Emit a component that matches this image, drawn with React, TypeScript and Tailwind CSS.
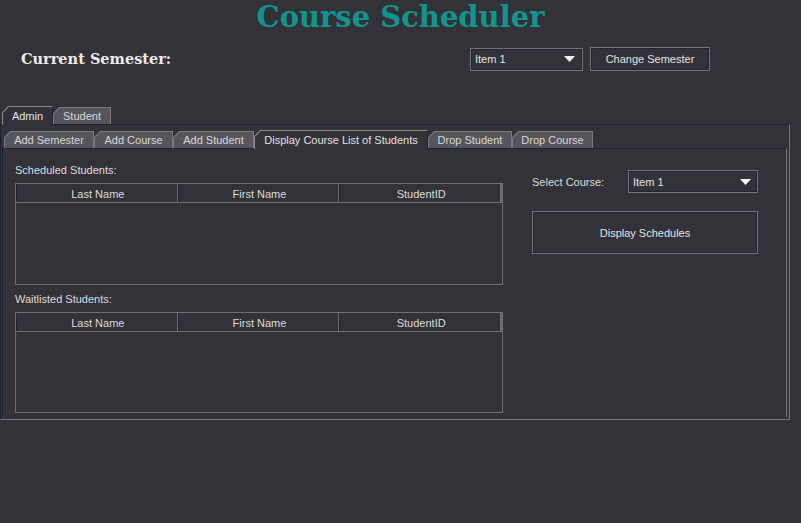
import React from "react";

const BG = "bg-[#333238]";

function Corner({ selected }: { selected: boolean }) {
  return (
    <svg
      width="7"
      height="7"
      viewBox="0 0 7 7"
      className="absolute -top-px -left-px"
    >
      <polygon points="0,0 7,0 0,7" fill="#333238" />
      <line x1="0" y1="7" x2="7" y2="0" stroke={selected ? "#8a898f" : "#7a797f"} strokeWidth="1.2" />
    </svg>
  );
}

function Tab({ label, selected, width }: { label: string; selected?: boolean; width: string }) {
  if (selected) {
    return (
      <div
        className={`relative z-10 -mb-px h-[19px] ${width} ${BG} border-t border-l border-t-[#8a898f] border-l-[#8a898f] border-r border-r-[#1d2536] flex items-center justify-center text-[#e2e2e2] pb-[1px]`}
      >
        <Corner selected />
        <span>{label}</span>
      </div>
    );
  }
  return (
    <div
      className={`relative h-[17px] ${width} bg-[#56555b] border-t border-l border-r border-[#7a797f] flex items-center justify-center text-[#d8d8d8]`}
    >
      <Corner selected={false} />
      <span>{label}</span>
    </div>
  );
}

function Arrow() {
  return (
    <svg width="11" height="6" viewBox="0 0 11 6">
      <polygon points="0,0 11,0 5.5,6" fill="#f2f2f2" />
    </svg>
  );
}

function Combo({ width, height, pr }: { width: string; height: string; pr: string }) {
  return (
    <div
      className={`${width} ${height} border border-[#737278] shadow-[inset_0_0_0_1px_#1d2536] flex items-center justify-between pl-[4px] ${pr} text-[#e4e4e4]`}
    >
      <span>Item 1</span>
      <Arrow />
    </div>
  );
}

function Table() {
  const cols = ["Last Name", "First Name", "StudentID"];
  return (
    <div className="w-[488px] flex-1 border border-[#6f6e74] flex flex-col">
      <div className="flex h-[19px] border-b border-[#6f6e74]">
        {cols.map((c, i) => (
          <div
            key={c}
            className={`flex-1 flex items-center justify-center text-[#dcdcdc] shadow-[inset_1px_0_0_#1d2536] pt-[1px] pl-[3px] ${
              i < 2 ? "border-r border-[#6f6e74]" : "border-r-2 border-[#6f6e74]"
            }`}
          >
            {c}
          </div>
        ))}
      </div>
      <div className="flex-1" />
    </div>
  );
}

export default function App() {
  return (
    <div
      className={`w-[801px] h-[523px] ${BG} overflow-hidden font-['Liberation_Sans',Arial,sans-serif] text-[11px] leading-[14px] text-[#dcdcdc]`}
    >
      {/* Title */}
      <div className="h-[34px] flex justify-center">
        <h1 className="font-['DejaVu_Serif',serif] font-bold text-[29px] leading-[34px] text-[#12948e]">
          Course Scheduler
        </h1>
      </div>

      {/* Semester row */}
      <div className="flex items-center h-[24px] mt-[13px]">
        <div className="ml-[21px] w-[449px] font-['DejaVu_Serif',serif] font-bold text-[14.5px] leading-[20px] text-[#ececec]">
          Current Semester:
        </div>
        <Combo width="w-[113px]" height="h-[23px]" pr="pr-[7px]" />
        <div className="ml-[7px] w-[120px] h-[24px] border border-[#737278] shadow-[inset_0_0_0_1px_#1d2536] flex items-center justify-center text-[#e2e2e2]">
          Change Semester
        </div>
      </div>

      {/* Outer tabs */}
      <div className="mt-[35px] flex items-end h-[18px] pl-[2px]">
        <Tab label="Admin" selected width="w-[51px]" />
        <Tab label="Student" width="w-[58px]" />
      </div>
      <div className="w-[790px] h-[296px] border-t border-t-[#1b2740] border-l border-l-[#1d2332] border-r border-r-[#77767c] border-b border-b-[#77767c] pt-[5px] pl-[1px] pr-[2px] pb-[2px] flex flex-col">
        {/* Inner tabs */}
        <div className="flex items-end h-[18px] pl-[2px]">
          <Tab label="Add Semester" width="w-[90px]" />
          <Tab label="Add Course" width="w-[79px]" />
          <Tab label="Add Student" width="w-[81px]" />
          <Tab label="Display Course List of Students" selected width="w-[174px]" />
          <Tab label="Drop Student" width="w-[84px]" />
          <Tab label="Drop Course" width="w-[81px]" />
        </div>
        <div className="flex-1 border-t border-t-[#1b2740] border-l border-l-[#1d2332] border-r border-r-[#77767c] flex pl-[12px] pt-[14px] pb-[3px] gap-[29px]">
          {/* Left: tables */}
          <div className="flex flex-col w-[488px]">
            <div className="h-[14px] mb-[6px]">Scheduled Students:</div>
            <div className="h-[102px] flex flex-col">
              <Table />
            </div>
            <div className="h-[14px] mt-[7px] mb-[6px]">Waitlisted Students:</div>
            <div className="h-[101px] flex flex-col">
              <Table />
            </div>
          </div>
          {/* Right */}
          <div className="flex flex-col w-[226px] mt-[7px]">
            <div className="flex items-center h-[23px]">
              <div className="w-[96px] pt-[1px]">Select Course:</div>
              <Combo width="w-[130px]" height="h-[23px]" pr="pr-[6px]" />
            </div>
            <div className="mt-[18px] h-[43px] border border-[#737278] shadow-[inset_0_0_0_1px_#1d2536] flex items-center justify-center text-[#e2e2e2]">
              Display Schedules
            </div>
          </div>
        </div>
      </div>
    </div>
  );
}
